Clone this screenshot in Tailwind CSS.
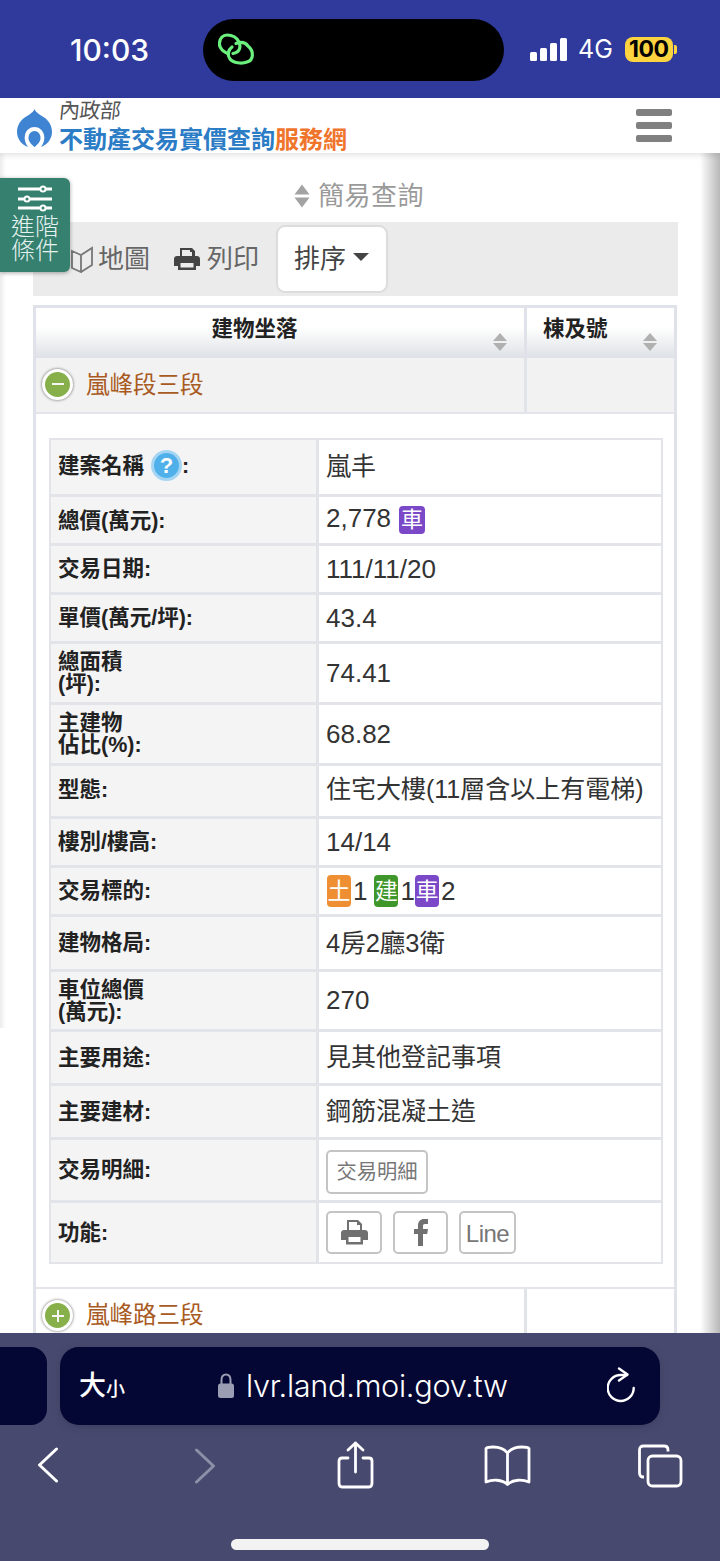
<!DOCTYPE html>
<html lang="zh-Hant">
<head>
<meta charset="utf-8">
<script src="https://cdn.jsdelivr.net/npm/@tailwindcss/browser@4"></script>
</head>
<body class="m-0 bg-white">
<div class="relative w-[720px] h-[1561px] overflow-hidden flex flex-col bg-white font-['Liberation_Sans','Noto_Sans_CJK_TC',sans-serif] text-[#333]">

  <!-- status bar -->
  <div class="h-[98px] shrink-0 bg-[#303a9c] flex items-center pt-[1px] relative">
    <span class="ml-[70px] w-[133px] text-white text-[30px] font-medium font-['Inter',sans-serif] leading-none">10:03</span>
    <div class="w-[301px] h-[62px] rounded-[31px] bg-black flex items-center pl-[15px]">
      <svg width="38" height="34" viewBox="0 0 38 34" fill="none" stroke="#6bf07e" stroke-width="3.200" stroke-linecap="round"><path d="M10.500 21C4 18 1 14 1.500 10C2 5 5 2 9 2C15 2 19 5 21 9C23 14 22 19 15 20.500"/><path d="M18 10.500C22 9 27 9 30 13C36 18 36 27 29 29C24 31 15 30 12 26C9 22 10 17 14 14"/></svg>
    </div>
    <div class="ml-[26px] flex items-end gap-[3px] h-[22px]">
      <i class="block w-[7px] h-[9px] rounded-[1.5px] bg-white"></i>
      <i class="block w-[7px] h-[13px] rounded-[1.5px] bg-white"></i>
      <i class="block w-[7px] h-[18px] rounded-[1.5px] bg-white"></i>
      <i class="block w-[7px] h-[23px] rounded-[1.5px] bg-white"></i>
    </div>
    <span class="ml-[11px] text-white text-[25px] font-['Inter',sans-serif] leading-none">4G</span>
    <div class="ml-[12px] w-[48px] h-[25px] rounded-[8px] bg-[#fdd33f] text-black text-[23px] font-bold font-['Inter',sans-serif] leading-[25px] text-center tracking-[-0.5px]">100</div>
    <i class="block ml-[1px] w-[3px] h-[9px] rounded-r-[2px] bg-[#fdd33f]"></i>
  </div>

  <!-- header -->
  <div class="h-[55px] shrink-0 bg-white flex items-start relative z-10 shadow-[0_2px_6px_rgba(0,0,0,0.12)]">
    <svg class="ml-[16px] mt-[11px] shrink-0" width="37" height="39" viewBox="0 0 37 39"><path d="M18.500 0C20 4 25 6 29 9C34 13 36 18 36 23C36 30 31 36 25 38C28 34 29 30 28 26C27 21 23 18 18.500 18C14 18 10 21 9 26C8 30 9 34 12 38C6 36 1 30 1 23C1 18 3 13 8 9C12 6 17 4 18.500 0Z" fill="#3f84d2"/><path d="M18.500 22C22 22 24.500 25 24.500 29C24.500 33 21 36 18.500 38C16 36 12.500 33 12.500 29C12.500 25 15 22 18.500 22Z" fill="#3f84d2"/></svg>
    <div class="ml-[6px] flex flex-col">
      <span class="block h-[28px] text-[#555] text-[21px] leading-[26px] -skew-x-6 tracking-[-0.5px] font-normal whitespace-nowrap">內政部</span>
      <span class="block text-[24px] leading-[28px] font-bold text-[#2c7cc6] whitespace-nowrap">不動產交易實價查詢<span class="text-[#f0752c]">服務網</span></span>
    </div>
    <div class="ml-auto mr-[48px] mt-[11px] flex flex-col gap-[6px]">
      <i class="block w-[36px] h-[7px] rounded-[2px] bg-[#808080]"></i>
      <i class="block w-[36px] h-[7px] rounded-[2px] bg-[#808080]"></i>
      <i class="block w-[36px] h-[7px] rounded-[2px] bg-[#808080]"></i>
    </div>
  </div>

  <!-- main -->
  <div class="relative flex-1 overflow-hidden bg-white">
    <div class="absolute right-0 top-0 bottom-0 w-[20px] bg-gradient-to-r from-white to-[#b8b8b8]"></div>
    <div class="absolute left-0 top-0 bottom-[305px] w-[6px] bg-gradient-to-r from-[#ececec] to-white"></div>

    <div class="relative ml-[33px] w-[645px]">
      <!-- simple query -->
      <div class="h-[69px] flex items-center justify-center gap-[8px] pt-[16px] pl-[7px]">
        <svg width="16" height="24" viewBox="0 0 16 24" fill="#a3a3a3"><path d="M8 0.500L15.500 10.500H0.500Z"/><path d="M8 23.500L15.500 13.500H0.500Z"/></svg>
        <span class="text-[26px] leading-none text-[#9a9a9a] tracking-[0.4px]">簡易查詢</span>
      </div>

      <!-- toolbar -->
      <div class="h-[74px] bg-[#ebebeb] flex items-center text-[26px] text-[#666]">
        <svg class="ml-[38px]" width="22" height="27" viewBox="0 0 22 27" fill="none" stroke="#777" stroke-width="1.800"><path d="M1 5L10 9V26L1 22Z"/><path d="M10 9L21 2V19L10 26"/></svg>
        <span class="ml-[5px] leading-none">地圖</span>
        <svg class="ml-[24px]" width="26" height="24" viewBox="0 0 26 24" fill="#444"><path d="M6 1H18L21 4V9H18V5H16V3H8V9H6Z"/><path fill-rule="evenodd" d="M3 9H23C24.700 9 26 10.300 26 12V19H22V23H4V19H0V12C0 10.300 1.300 9 3 9ZM6.500 16V20.500H19.500V16Z"/></svg>
        <span class="ml-[7px] leading-none">列印</span>
        <div class="ml-[17px] w-[112px] h-[68px] bg-white border-2 border-[#dcdcdc] rounded-[9px] flex items-center justify-center gap-[7px] text-[#444] pr-[1px]">
          <span class="leading-none">排序</span>
          <svg width="16" height="8" viewBox="0 0 16 8" fill="#444" class="mb-[4px]"><path d="M0 0H16L8 8Z"/></svg>
        </div>
      </div>

      <!-- outer table -->
      <div class="mt-[9px] border-[3px] border-[#dfe2e8] border-b-0 w-[644px]">
        <div class="flex h-[50px] border-b-[2px] border-[#dfe2e8] bg-gradient-to-b from-white from-40% to-[#e0e3e7]">
          <div class="relative w-[491px] border-r-[3px] border-[#dfe2e8] text-center text-[21.500px] font-bold text-[#222] leading-[43px] pr-[51px]">建物坐落
            <svg class="absolute right-[17px] bottom-[5px]" width="14" height="18" viewBox="0 0 14 18" fill="#b0b0b0"><path d="M7 0L14 8H0Z"/><path d="M7 18L14 10H0Z"/></svg>
          </div>
          <div class="relative flex-1 text-[21.500px] font-bold text-[#222] leading-[43px] pl-[16px]">棟及號
            <svg class="absolute right-[17px] bottom-[5px]" width="14" height="18" viewBox="0 0 14 18" fill="#b0b0b0"><path d="M7 0L14 8H0Z"/><path d="M7 18L14 10H0Z"/></svg>
          </div>
        </div>
        <div class="flex h-[56px] border-b-[2px] border-[#e3e5ea] bg-[#f2f2f2]">
          <div class="w-[491px] border-r-[3px] border-[#e0e3e8] flex items-center pl-[6px] pb-[2px]">
            <span class="w-[31px] h-[31px] rounded-full bg-[#87b04a] border-[3px] border-white shadow-[0_0_3px_rgba(0,0,0,0.6)] flex items-center justify-center"><i class="block w-[12px] h-[2px] bg-[#f5f5f5]"></i></span>
            <span class="ml-[13px] text-[#a85a22] text-[23.500px] leading-none pt-[3px]">嵐峰段三段</span>
          </div>
          <div class="flex-1"></div>
        </div>

        <!-- detail -->
        <div class="h-[873px] pl-[13px] pt-[24px]">
          <div class="w-[614px] border-2 border-[#e2e4e9] text-[#333]">
            <div class="flex h-[57px] border-b-[3px] border-[#e2e4e9]"><div class="w-[268px] shrink-0 bg-[#f4f4f5] border-r-[3px] border-[#e2e4e9] flex items-center pl-[7px] pb-[3px] text-[#222] font-bold text-[21.500px] leading-[22px]">建案名稱<span class="ml-[7px] w-[31px] h-[31px] rounded-full bg-[#4fb0ea] border-[3px] border-[#a5d5f3] text-white text-[22px] leading-[25px] text-center font-bold">?</span>:</div><div class="flex-1 flex items-center pl-[7px] text-[25px]">嵐丰</div></div>
            <div class="flex h-[49px] border-b-[3px] border-[#e2e4e9]"><div class="w-[268px] shrink-0 bg-[#f4f4f5] border-r-[3px] border-[#e2e4e9] flex items-center pl-[7px] pt-[1px] text-[#222] font-bold text-[21.500px] leading-[22px]">總價(萬元):</div><div class="flex-1 flex items-center pl-[7px] text-[26px] pb-[3px]">2,778<span class="ml-[8px] mt-[3px] w-[26px] h-[28px] rounded-[4px] bg-[#7b48c8] text-white text-[22px] leading-[28px] text-center">車</span></div></div>
            <div class="flex h-[49px] border-b-[3px] border-[#e2e4e9]"><div class="w-[268px] shrink-0 bg-[#f4f4f5] border-r-[3px] border-[#e2e4e9] flex items-center pl-[7px] text-[#222] font-bold text-[21.500px] leading-[22px]">交易日期:</div><div class="flex-1 flex items-center pl-[7px] text-[26px]">111/11/20</div></div>
            <div class="flex h-[49px] border-b-[3px] border-[#e2e4e9]"><div class="w-[268px] shrink-0 bg-[#f4f4f5] border-r-[3px] border-[#e2e4e9] flex items-center pl-[7px] text-[#222] font-bold text-[21.500px] leading-[22px]">單價(萬元/坪):</div><div class="flex-1 flex items-center pl-[7px] text-[26px]">43.4</div></div>
            <div class="flex h-[61px] border-b-[3px] border-[#e2e4e9]"><div class="w-[268px] shrink-0 bg-[#f4f4f5] border-r-[3px] border-[#e2e4e9] flex items-center pl-[7px] text-[#222] font-bold text-[21.500px] leading-[22px]">總面積<br>(坪):</div><div class="flex-1 flex items-center pl-[7px] text-[26px]">74.41</div></div>
            <div class="flex h-[61px] border-b-[3px] border-[#e2e4e9]"><div class="w-[268px] shrink-0 bg-[#f4f4f5] border-r-[3px] border-[#e2e4e9] flex items-center pl-[7px] text-[#222] font-bold text-[21.500px] leading-[22px]">主建物<br>佔比(%):</div><div class="flex-1 flex items-center pl-[7px] text-[26px]">68.82</div></div>
            <div class="flex h-[53px] border-b-[3px] border-[#e2e4e9]"><div class="w-[268px] shrink-0 bg-[#f4f4f5] border-r-[3px] border-[#e2e4e9] flex items-center pl-[7px] pb-[3px] text-[#222] font-bold text-[21.500px] leading-[22px]">型態:</div><div class="flex-1 flex items-center pl-[7px] pb-[3px] text-[25px] whitespace-nowrap">住宅大樓(11層含以上有電梯)</div></div>
            <div class="flex h-[49px] border-b-[3px] border-[#e2e4e9]"><div class="w-[268px] shrink-0 bg-[#f4f4f5] border-r-[3px] border-[#e2e4e9] flex items-center pl-[7px] text-[#222] font-bold text-[21.500px] leading-[22px]">樓別/樓高:</div><div class="flex-1 flex items-center pl-[7px] text-[26px]">14/14</div></div>
            <div class="flex h-[49px] border-b-[3px] border-[#e2e4e9]"><div class="w-[268px] shrink-0 bg-[#f4f4f5] border-r-[3px] border-[#e2e4e9] flex items-center pl-[7px] text-[#222] font-bold text-[21.500px] leading-[22px]">交易標的:</div><div class="flex-1 flex items-center pl-[8px] text-[26px]"><span class="w-[24px] h-[32px] rounded-[4px] bg-[#ef8f33] text-white text-[23px] leading-[32px] text-center">土</span><span class="ml-[2px]">1</span><span class="ml-[7px] w-[24px] h-[32px] rounded-[4px] bg-[#3f962b] text-white text-[23px] leading-[32px] text-center">建</span><span class="ml-[2px]">1</span><span class="w-[24px] h-[32px] rounded-[4px] bg-[#7b48c8] text-white text-[23px] leading-[32px] text-center">車</span><span class="ml-[2px]">2</span></div></div>
            <div class="flex h-[55px] border-b-[3px] border-[#e2e4e9]"><div class="w-[268px] shrink-0 bg-[#f4f4f5] border-r-[3px] border-[#e2e4e9] flex items-center pl-[7px] text-[#222] font-bold text-[21.500px] leading-[22px]">建物格局:</div><div class="flex-1 flex items-center pl-[7px] text-[25.500px]">4房2廳3衛</div></div>
            <div class="flex h-[60px] border-b-[3px] border-[#e2e4e9]"><div class="w-[268px] shrink-0 bg-[#f4f4f5] border-r-[3px] border-[#e2e4e9] flex items-center pl-[7px] text-[#222] font-bold text-[21.500px] leading-[22px]">車位總價<br>(萬元):</div><div class="flex-1 flex items-center pl-[7px] text-[26px]">270</div></div>
            <div class="flex h-[54px] border-b-[3px] border-[#e2e4e9]"><div class="w-[268px] shrink-0 bg-[#f4f4f5] border-r-[3px] border-[#e2e4e9] flex items-center pl-[7px] text-[#222] font-bold text-[21.500px] leading-[22px]">主要用途:</div><div class="flex-1 flex items-center pl-[7px] text-[25px]">見其他登記事項</div></div>
            <div class="flex h-[54px] border-b-[3px] border-[#e2e4e9]"><div class="w-[268px] shrink-0 bg-[#f4f4f5] border-r-[3px] border-[#e2e4e9] flex items-center pl-[7px] text-[#222] font-bold text-[21.500px] leading-[22px]">主要建材:</div><div class="flex-1 flex items-center pl-[7px] text-[25px]">鋼筋混凝土造</div></div>
            <div class="flex h-[63px] border-b-[3px] border-[#e2e4e9]"><div class="w-[268px] shrink-0 bg-[#f4f4f5] border-r-[3px] border-[#e2e4e9] flex items-center pl-[7px] text-[#222] font-bold text-[21.500px] leading-[22px]">交易明細:</div><div class="flex-1 flex items-center pl-[7px] pt-[3px]"><span class="w-[102px] h-[44px] border-2 border-[#c4c4c4] rounded-[5px] text-[#777] text-[20.300px] leading-[40px] text-center">交易明細</span></div></div>
            <div class="flex h-[59px]"><div class="w-[268px] shrink-0 bg-[#f4f4f5] border-r-[3px] border-[#e2e4e9] flex items-center pl-[7px] text-[#222] font-bold text-[21.500px] leading-[22px]">功能:</div><div class="flex-1 flex items-center pl-[7px]">
              <span class="w-[56px] h-[43px] border-2 border-[#c4c4c4] rounded-[5px] flex items-center justify-center"><svg width="27" height="25" viewBox="0 0 27 25" fill="#707070"><path fill-rule="evenodd" d="M6 0H17L21 4V10H19V5H16V2H8V10H6Z"/><path fill-rule="evenodd" d="M3 10H24C25.700 10 27 11.300 27 13V20H22V24.500H5V20H0V13C0 11.300 1.300 10 3 10ZM7.500 17V22H19.500V17Z"/></svg></span>
              <span class="ml-[11px] w-[55px] h-[43px] border-2 border-[#c4c4c4] rounded-[5px] flex items-center justify-center"><svg width="14" height="27" viewBox="0 0 14 27" fill="#707070"><path d="M4 27V15H0V10H4V6.500C4 2.500 6.500 0 10 0H14V5H11C9.500 5 9 5.800 9 7V10H14L13.200 15H9V27Z"/></svg></span>
              <span class="ml-[11px] w-[57px] h-[43px] border-2 border-[#c4c4c4] rounded-[5px] text-[#777] text-[24px] leading-[42px] text-center tracking-[-0.5px]">Line</span>
            </div></div>
          </div>
        </div>

        <!-- next row -->
        <div class="flex h-[60px] border-t-[2px] border-[#e3e5ea] bg-white">
          <div class="w-[491px] border-r-[3px] border-[#e0e3e8] flex items-start pt-[11px] pl-[6px]">
            <span class="w-[31px] h-[31px] rounded-full bg-[#87b04a] border-[3px] border-white shadow-[0_0_3px_rgba(0,0,0,0.6)] flex items-center justify-center relative"><i class="block w-[12px] h-[2px] bg-[#f5f5f5]"></i><i class="absolute block w-[2px] h-[12px] bg-[#f5f5f5]"></i></span>
            <span class="ml-[13px] text-[#a85a22] text-[23.500px] leading-[30px]">嵐峰路三段</span>
          </div>
          <div class="flex-1"></div>
        </div>
      </div>
    </div>

    <!-- advanced filter -->
    <div class="absolute left-0 top-[25px] w-[70px] h-[94px] bg-[#35806f] rounded-r-[6px] shadow-[0_1px_4px_rgba(0,0,0,0.35)] flex flex-col items-center pt-[7px] text-white">
      <svg width="34" height="28" viewBox="0 0 34 28" fill="none" stroke="#fff" stroke-width="3"><path d="M0 4H22M28 4H34"/><circle cx="25" cy="4" r="2.500" stroke-width="2"/><path d="M0 14H6M12 14H34"/><circle cx="9" cy="14" r="2.500" stroke-width="2"/><path d="M0 23H22M28 23H34"/><circle cx="25" cy="23" r="2.500" stroke-width="2"/></svg>
      <span class="block text-[24px] leading-[24px] text-[#e6f2ef] font-light mt-[2px] text-center">進階<br>條件</span>
    </div>
  </div>

  <!-- browser bottom -->
  <div class="relative h-[228px] shrink-0 bg-[#47496f] z-10">
    <div class="absolute left-[-20px] top-[14px] w-[67px] h-[78px] rounded-[16px] bg-[#040633]"></div>
    <div class="ml-[60px] mt-[14px] absolute w-[600px] h-[78px] rounded-[19px] bg-[#040633] shadow-[0_2px_8px_rgba(0,0,0,0.15)] flex items-center text-white">
      <span class="ml-[19px] text-[27px] leading-none font-medium">大</span><span class="text-[19px] font-medium leading-none mt-[6px]">小</span>
      <svg class="ml-[92px]" width="18" height="26" viewBox="0 0 18 26" fill="#9b9db2"><path d="M4.500 11V7C4.500 3.500 6.300 1.500 9 1.500C11.700 1.500 13.500 3.500 13.500 7V11" fill="none" stroke="#9b9db2" stroke-width="2"/><rect x="1" y="10.500" width="16" height="14.500" rx="2.500"/></svg>
      <span class="ml-[11px] text-[30.700px] leading-none font-['Inter',sans-serif] font-light tracking-[-0.3px] whitespace-nowrap">lvr.land.moi.gov.tw</span>
      <svg class="absolute right-[23px] top-[20px]" width="30" height="36" viewBox="0 0 30 36" fill="none" stroke="#fff" stroke-width="2.400" stroke-linecap="round" stroke-linejoin="round"><path d="M26.700 21A13 13 0 1 1 13.700 8H20"/><path d="M12 1.500L20.500 7.500L12 13.500"/></svg>
    </div>
    <svg class="absolute left-[37px] top-[114px]" width="22" height="36" viewBox="0 0 22 36" fill="none" stroke="#fff" stroke-width="3" stroke-linecap="round" stroke-linejoin="round"><path d="M19.500 2L2.500 18L19.500 34"/></svg>
    <svg class="absolute left-[194px] top-[115px]" width="22" height="36" viewBox="0 0 22 36" fill="none" stroke="#8e90a8" stroke-width="3" stroke-linecap="round" stroke-linejoin="round"><path d="M2.500 2L19.500 18L2.500 34"/></svg>
    <svg class="absolute left-[337px] top-[108px]" width="37" height="48" viewBox="0 0 37 48" fill="none" stroke="#fff" stroke-width="2.800" stroke-linecap="round" stroke-linejoin="round"><path d="M11 17H5C3 17 2 18 2 20V42C2 44.500 3 46 5 46H32C34 46 35 44.500 35 42V20C35 18 34 17 32 17H26"/><path d="M18.500 31V2M11 9L18.500 2L26 9"/></svg>
    <svg class="absolute left-[484px] top-[112px]" width="47" height="41" viewBox="0 0 47 41" fill="none" stroke="#fff" stroke-width="2.800" stroke-linecap="round" stroke-linejoin="round"><path d="M23.500 8C20 3.500 15 2 9 2C6 2 3 2.500 2 3.500V37C8 34.500 18 34 23.500 39.500C29 34 39 34.500 45 37V3.500C44 2.500 41 2 38 2C32 2 27 3.500 23.500 8ZM23.500 8V39"/></svg>
    <svg class="absolute left-[638px] top-[111px]" width="45" height="44" viewBox="0 0 45 44" fill="none" stroke="#fff" stroke-width="2.800" stroke-linejoin="round"><rect x="10" y="12" width="33" height="30" rx="4.500"/><path d="M6 33H5C3 33 1.500 31.500 1.500 29V6C1.500 3.500 3 2 5.500 2H26C28.500 2 30 3.500 30 6V7.500"/></svg>
    <div class="absolute left-[231px] top-[206px] w-[258px] h-[11px] rounded-full bg-[#f2f2f2]"></div>
  </div>
</div>
</body>
</html>
